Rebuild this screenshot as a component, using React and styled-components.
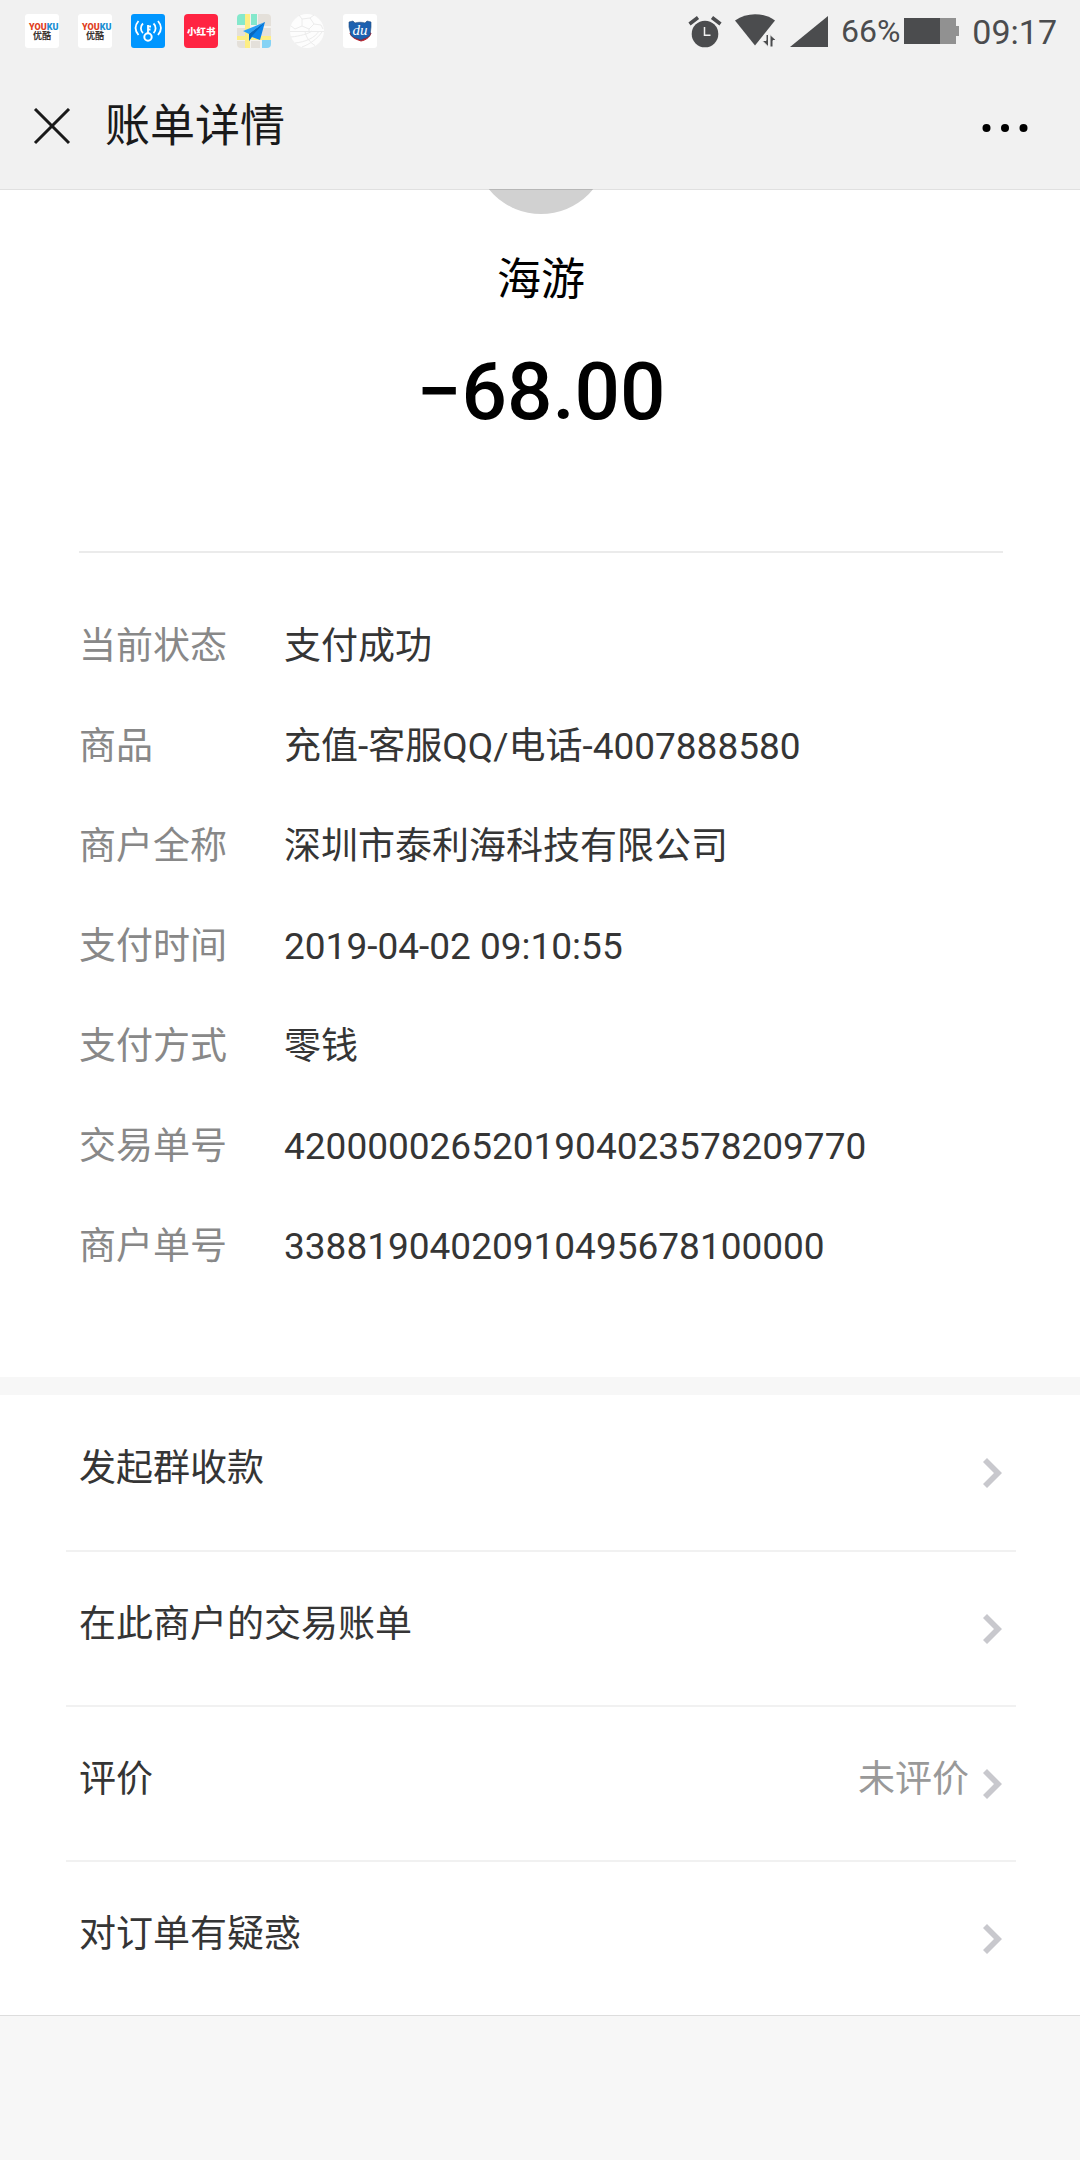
import React from 'react'
import { styled, createGlobalStyle } from 'styled-components'

const details = [
  { label: "当前状态", value: "支付成功" },
  { label: "商品", value: "充值-客服QQ/电话-4007888580" },
  { label: "商户全称", value: "深圳市泰利海科技有限公司" },
  { label: "支付时间", value: "2019-04-02 09:10:55" },
  { label: "支付方式", value: "零钱" },
  { label: "交易单号", value: "4200000265201904023578209770" },
  { label: "商户单号", value: "33881904020910495678100000" },
];

const links = [
  { text: "发起群收款" },
  { text: "在此商户的交易账单" },
  { text: "评价", extra: "未评价" },
  { text: "对订单有疑惑" },
];

const GlobalStyle = createGlobalStyle`
  * {
    box-sizing: border-box;
  }

  body {
    margin: 0;
    background: #f7f7f7;
    color: #353535;
    font-family: Roboto, "Noto Sans CJK SC", sans-serif;
    font-size: 37px;
  }

  svg {
    display: block;
    flex: none;
  }
`;

const StatusBar = styled.div`
  height: 64px;
  padding: 0 23px 2px 25px;
  display: flex;
  align-items: center;
  justify-content: space-between;
  background: #f1f1f1;
  color: #4b4c4e;
`;

const Notifications = styled.div`
  display: flex;
  gap: 19px;
`;

const System = styled.div`
  display: flex;
  align-items: center;
  gap: 13px;
`;

const Power = styled.div`
  display: flex;
  align-items: center;
  gap: 4px;
  font-size: 32px;
  line-height: 40px;
`;

const Clock = styled.time`
  padding-top: 2px;
  font-size: 34px;
  line-height: 40px;
`;

const Header = styled.header`
  position: relative;
  z-index: 1;
  height: 126px;
  padding: 0 48px 0 29px;
  display: flex;
  align-items: center;
  background: #f1f1f1;
  background-clip: padding-box;
  border-bottom: 1px solid rgba(0, 0, 0, 0.12);
`;

const IconButton = styled.button`
  padding: 4px;
  border: 0;
  background: none;
  color: ${(props) => props.$color};
  cursor: pointer;
`;

const Title = styled.h1`
  flex: 1;
  margin: 0 0 0 30px;
  font-size: 45px;
  line-height: 60px;
  font-weight: 400;
  color: #1a1a1a;
`;

const Bill = styled.main`
  margin-top: -1px;
  padding: 0 77px 80px 79px;
  overflow: hidden;
  background: white;
`;

const Summary = styled.section`
  display: flex;
  flex-direction: column;
  align-items: center;
  padding-bottom: 109px;
  border-bottom: 2px solid #ebebeb;
  color: black;
`;

const Avatar = styled.div`
  width: 134px;
  height: 134px;
  margin-top: -109px;
  border-radius: 50%;
  background: #d1d1d1;
`;

const Payee = styled.div`
  margin-top: 36px;
  font-size: 44px;
  line-height: 60px;
`;

const Amount = styled.div`
  margin-top: 32px;
  font-size: 80px;
  line-height: 100px;
  font-weight: 500;
`;

const Details = styled.dl`
  margin: 44px 0 0;
`;

const DetailRow = styled.div`
  display: flex;
  padding: 22px 0;
  line-height: 56px;
`;

const Label = styled.dt`
  width: 205px;
  color: #888;
`;

const Value = styled.dd`
  margin: 0;
`;

const Links = styled.nav`
  margin-top: 18px;
  padding: 0 64px 0 66px;
  background: white;
  border-bottom: 1px solid #ddd;
`;

const LinkRow = styled.a`
  height: 155px;
  padding: 0 14px 0 13px;
  display: flex;
  align-items: center;
  color: inherit;
  text-decoration: none;

  & + & {
    border-top: 2px solid #f1f1f1;
  }
`;

const LinkText = styled.span`
  flex: 1;
  padding-bottom: 8px;
  line-height: 56px;
`;

const Extra = styled.span`
  padding: 0 14px 8px 0;
  line-height: 56px;
  color: #999;
`;

const YoukuIcon = () => (
  <svg width="34" height="34" viewBox="0 0 34 34">
    <rect width="34" height="34" rx="3" fill="#fff" />
    <text x="4" y="16" fontSize="9" fontWeight="900" fill="#e0401c">
      YOU<tspan fill="#1b8fd2">KU</tspan>
    </text>
    <text x="8" y="25" fontSize="9" fontWeight="700" fill="#3a3230">优酷</text>
  </svg>
)

const HotspotIcon = () => (
  <svg width="34" height="34" viewBox="0 0 34 34" fill="none" stroke="#fff" strokeWidth="1.8">
    <rect width="34" height="34" rx="3" fill="#0096ff" stroke="none" />
    <circle cx="17" cy="23" r="3.7" strokeWidth="2" />
    <path d="M17 19.500V11M17 12.500h3M17 15.500h2.500" />
    <path d="M12 9.500c-2.800 2.500-2.800 7 0 9.500M7.500 7c-3.800 4.500-3.800 9.500 0 14M22.500 9.500c2.800 2.500 2.800 7 0 9.500M27 7c3.800 4.500 3.800 9.500 0 14" />
  </svg>
)

const RedBookIcon = () => (
  <svg width="34" height="34" viewBox="0 0 34 34">
    <rect width="34" height="34" rx="4" fill="#ff2442" />
    <text x="3" y="21" fontSize="9.500" fontWeight="900" fill="#fff">小红书</text>
  </svg>
)

const MapIcon = () => (
  <svg width="34" height="34" viewBox="0 0 34 34">
    <defs>
      <clipPath id="map"><rect width="34" height="34" rx="4" /></clipPath>
    </defs>
    <g clipPath="url(#map)">
      <rect width="34" height="34" fill="#f4f2ee" />
      <path d="M0 0h8v11H0zM14 0h6v11h-6z" fill="#84e8cc" />
      <path d="M21 0h13v12H21zM0 14h8v8H0zM14 14h20v8H14zM0 27h8v7H0zM14 27h9v7h-9z" fill="#e4e0da" />
      <path d="M8 0h5v34H8zM0 22h34v4H0z" fill="#fdee84" />
      <path d="M25 26h9v8h-9z" fill="#86d3f5" />
      <path d="M28 8L6 17l6 3z" fill="#2aa0f6" />
      <path d="M28 8L12 20v7l3-4 8 3z" fill="#0a84ea" />
      <path d="M28 8L12 20v7l3-5z" fill="#0667bd" />
    </g>
  </svg>
)

const BallIcon = () => (
  <svg width="34" height="34" viewBox="0 0 34 34" fill="none" stroke="#ececec" strokeWidth="1">
    <circle cx="17" cy="17" r="17" fill="#fdfdfd" stroke="none" />
    <path d="M0 17.500h34M12 5l8-1 4 6-5 5-7-3zM12 5L9 1M20 4l4-3M24 10l7 1M12 12l-7 3M5 15L1 12M19 15v2M31 11l2 4" />
    <path d="M1 23c9-1 17-3 21-6M5 29c10-1 20-5 24-12M12 33c8-3 15-8 20-15M15 17.500c1 6 5 11 10 14" />
  </svg>
)

const DuIcon = () => (
  <svg width="34" height="34" viewBox="0 0 34 34">
    <rect width="34" height="34" rx="3" fill="#fff" />
    <path d="M7 19c1 4 5 6 11 8 5-1 9-4 10-8z" fill="#b5202c" stroke="#b5202c" />
    <path d="M6 8l4-1 2 2c3-1 7-1 10 0l2-2 4 1v5l-1 8c-2 3-6 3-9 5-4-2-8-2-10-5L6 13z" fill="#1d61b0" stroke="#244b7c" strokeWidth=".6" />
    <text x="17" y="21" fontSize="15" fontWeight="400" fontStyle="italic" textAnchor="middle" fill="#fff" fontFamily="Liberation Serif, serif">du</text>
  </svg>
)

const AlarmIcon = () => (
  <svg width="34" height="34" viewBox="0 0 34 34" fill="none" stroke="currentColor">
    <circle cx="17" cy="20" r="13.300" fill="currentColor" stroke="none" />
    <path d="M1.500 10L10 3.500M32.500 10L24 3.500" strokeWidth="3.600" />
    <path d="M16.500 13v8.300h6" stroke="#f1f1f1" strokeWidth="1.500" />
  </svg>
)

const WifiIcon = () => (
  <svg width="42" height="34" viewBox="0 0 42 34" fill="currentColor">
    <path d="M0 6.500C12-2 28-2 40 6.500L20 31.500z" />
    <path d="M33.500 20.500V33l-6.500-6.500h4v-6zM35 33V20.500l6.500 6H38v6.500z" stroke="#f1f1f1" strokeWidth="1" />
  </svg>
)

const SignalIcon = () => (
  <svg width="38" height="34" viewBox="0 0 38 34" fill="currentColor">
    <path d="M38 2v31H0z" />
  </svg>
)

const BatteryIcon = () => (
  <svg width="55" height="26" viewBox="0 0 55 26">
    <path d="M0 0h52v8h3v10h-3v8H0z" fill="#919191" />
    <path d="M0 0h36v26H0z" fill="currentColor" />
  </svg>
)

const CloseIcon = () => (
  <svg width="38" height="38" viewBox="0 0 38 38" stroke="currentColor" strokeWidth="3">
    <path d="M2 1l34 34M36 1L2 35" />
  </svg>
)

const MoreIcon = () => (
  <svg width="46" height="10" viewBox="0 0 46 10" fill="currentColor">
    <circle cx="4.500" cy="6" r="4" />
    <circle cx="23" cy="6" r="4" />
    <circle cx="41.500" cy="6" r="4" />
  </svg>
)

const Chevron = () => (
  <svg width="19" height="30" viewBox="0 0 19 30" fill="#c8c8cd">
    <path d="M4 0l15 15L4 30l-4-4 11-11L0 4z" />
  </svg>
)

const App = () => {
  return (
    <>
      <GlobalStyle />
      <StatusBar>
        <Notifications>
          <YoukuIcon />
          <YoukuIcon />
          <HotspotIcon />
          <RedBookIcon />
          <MapIcon />
          <BallIcon />
          <DuIcon />
        </Notifications>
        <System>
          <AlarmIcon />
          <WifiIcon />
          <SignalIcon />
          <Power>
            66%
            <BatteryIcon />
          </Power>
          <Clock>09:17</Clock>
        </System>
      </StatusBar>
      <Header>
        <IconButton type="button" aria-label="关闭" $color="#1a1a1a">
          <CloseIcon />
        </IconButton>
        <Title>账单详情</Title>
        <IconButton type="button" aria-label="更多" $color="#000">
          <MoreIcon />
        </IconButton>
      </Header>
      <Bill>
        <Summary>
          <Avatar />
          <Payee>海游</Payee>
          <Amount>−68.00</Amount>
        </Summary>
        <Details>
          {details.map((item) => (
            <DetailRow key={item.label}>
              <Label>{item.label}</Label>
              <Value>{item.value}</Value>
            </DetailRow>
          ))}
        </Details>
      </Bill>
      <Links>
        {links.map((item) => (
          <LinkRow key={item.text} href="#">
            <LinkText>{item.text}</LinkText>
            {item.extra && <Extra>{item.extra}</Extra>}
            <Chevron />
          </LinkRow>
        ))}
      </Links>
    </>
  )
}

export default App
